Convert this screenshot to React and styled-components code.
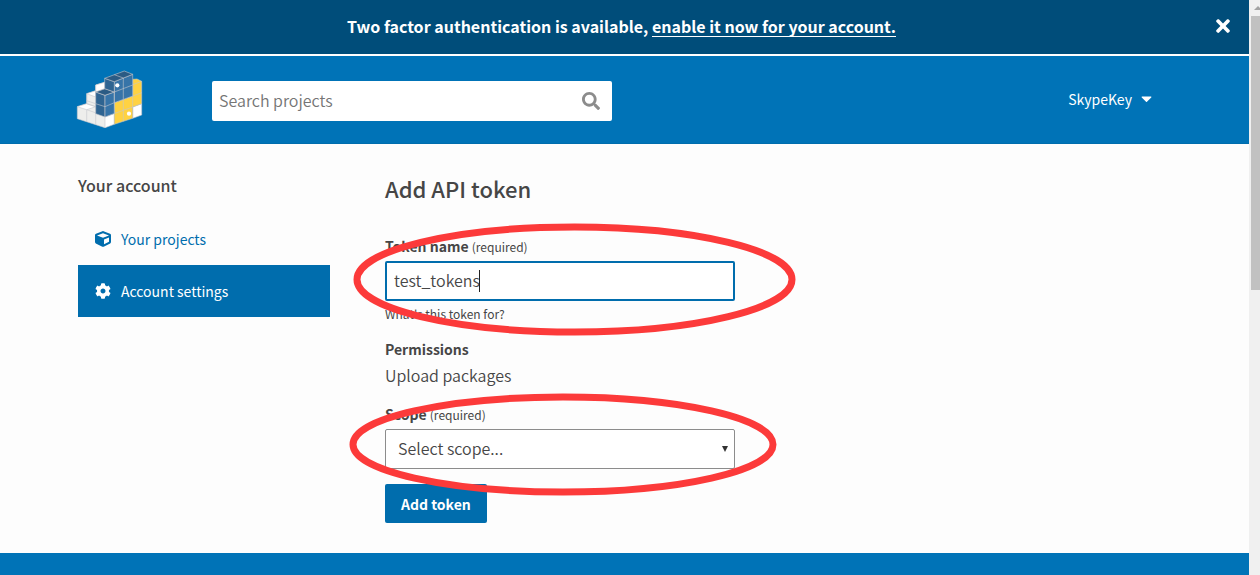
import React from "react";
import styled, { createGlobalStyle } from "styled-components";
import { FaTimes, FaSearch, FaCube, FaCog, FaCaretDown } from "react-icons/fa";

const GlobalStyle = createGlobalStyle`
  *, *::before, *::after { box-sizing: border-box; }
  body {
    margin: 0;
    background: #fdfdfd;
    color: #464646;
    font-family: "Noto Sans CJK SC", "Noto Sans", sans-serif;
    font-size: 16px;
    font-weight: 350;
    line-height: 24px;
  }
  input, select, button { font: inherit; color: inherit; margin: 0; }
`;

const Shell = styled.div`
  display: grid;
  grid-template-columns: minmax(0, 1fr) 11px;
  height: 100vh;
  overflow: hidden;
`;

const Page = styled.div`
  display: flex;
  flex-direction: column;
  min-width: 0;
`;

const Scrollbar = styled.div`
  display: flex;
  flex-direction: column;
  align-items: flex-end;
  background: #f0f0f0;
  overflow: hidden;
`;

const ScrollArrow = styled.svg`
  flex: none;
  width: 9px;
  height: 16px;
  fill: #a3a3a3;
`;

const ScrollThumb = styled.div`
  width: 9px;
  height: 274px;
  background: #c1c1c1;
`;

const Banner = styled.div`
  display: flex;
  align-items: center;
  padding: 14px 16px 16px 30px;
  background: #004d7a;
  border-bottom: 2px solid #fff;
  color: #fff;
`;

const BannerText = styled.p`
  flex: 1;
  margin: 0;
  text-align: center;
  font-size: 16px;
  font-weight: 700;
`;

const BannerLink = styled.a`
  display: inline-block;
  color: inherit;
  line-height: 20px;
  text-decoration: none;
  border-bottom: 1px solid #fff;
`;

const IconButton = styled.button`
  display: flex;
  padding: 0;
  border: 0;
  background: none;
  color: inherit;
  font-size: ${(p) => p.$size}px;
`;

const Header = styled.header`
  background: #0073b7;
  border-bottom: 1px solid #006dad;
`;

const Container = styled.div`
  display: flex;
  align-items: center;
  max-width: 1169px;
  margin: 0 auto;
  padding: 0 38px;
`;

const HeaderRow = styled(Container)`
  padding-top: 14px;
  padding-bottom: 14px;
`;

const LogoLink = styled.a`
  display: block;
  width: 66px;
  height: 59px;
  margin-right: 68px;
`;

const Search = styled.form`
  display: flex;
  align-items: center;
  width: 400px;
  height: 40px;
  margin: 2px 0 0;
  padding-right: 12px;
  background: #fff;
  border-radius: 2px;
  color: #8c8c8c;
`;

const SearchInput = styled.input`
  flex: 1;
  min-width: 0;
  padding: 6px 7px 8px;
  border: 0;
  outline: 0;
  background: none;
  &::placeholder { color: #757575; opacity: 1; }
`;

const UserButton = styled.button`
  display: flex;
  align-items: center;
  gap: 6px;
  margin-left: auto;
  padding: 0 16px 2px;
  border: 0;
  background: none;
  color: #fff;
  font-size: 14px;
  font-weight: 400;
`;

const Body = styled(Container)`
  align-items: flex-start;
  gap: 55px;
  width: 100%;
  padding-top: 30px;
  padding-bottom: 30px;
`;

const Sidebar = styled.aside`
  flex: none;
  width: 252px;
`;

const SidebarTitle = styled.h2`
  margin: 0 0 17px;
  font-size: 16px;
  font-weight: 500;
  line-height: 22px;
`;

const SideLink = styled.a`
  display: flex;
  align-items: center;
  gap: 10px;
  height: 52px;
  padding: 0 17px;
  color: ${(p) => (p.$active ? "#fff" : "#006dad")};
  background: ${(p) => (p.$active ? "#006dad" : "transparent")};
  font-size: 14px;
  font-weight: 400;
  text-decoration: none;
  svg { font-size: 16px; }
`;

const Content = styled.main`
  flex: 1;
  min-width: 0;
`;

const Title = styled.h1`
  margin: 0 0 32px;
  font-size: 22px;
  font-weight: 500;
  line-height: 28px;
`;

const Group = styled.div`
  position: relative;
  width: 350px;
  margin-bottom: ${(p) => p.$gap}px;
`;

const Label = styled.label`
  display: block;
  margin: 0 0 2px;
  font-size: 14px;
  font-weight: 700;
`;

const Required = styled.span`
  font-size: 12px;
  font-weight: 400;
`;

const Control = styled.div`
  position: relative;
`;

const TextInput = styled.input`
  display: block;
  width: 100%;
  height: 40px;
  padding: 0 7px 2px;
  border: 2px solid #006dad;
  border-radius: 2px;
  outline: 0;
  background: #fff;
`;

const Caret = styled.span`
  position: absolute;
  top: 9px;
  left: 94px;
  width: 1px;
  height: 22px;
  background: #222;
`;

const Select = styled.select`
  display: block;
  width: 100%;
  height: 40px;
  padding: 0 12px 2px;
  appearance: none;
  border: 1px solid #8c8c8c;
  border-radius: 2px;
  background: #fff;
`;

const SelectArrow = styled.svg`
  position: absolute;
  top: 17px;
  right: 7px;
  width: 6px;
  height: 6px;
  fill: #333;
  pointer-events: none;
`;

const Help = styled.p`
  margin: 4px 0 0;
  font-size: 12px;
  font-weight: 400;
  line-height: 18px;
`;

const Plain = styled.p`
  margin: 0;
`;

const Submit = styled.button`
  display: block;
  height: 39px;
  padding: 0 16px;
  border: 0;
  border-radius: 2px;
  background: #006dad;
  color: #fff;
  font-size: 14px;
  font-weight: 700;
`;

const Oval = styled.svg`
  position: absolute;
  z-index: 1;
  top: ${(p) => p.$top}px;
  left: ${(p) => p.$left}px;
  overflow: visible;
  pointer-events: none;
  fill: none;
  stroke: #fc3a3a;
  stroke-width: 7;
`;

const Footer = styled.footer`
  flex: 1 0 22px;
  background: #0073b7;
`;

function Highlight({ top, left, width, height }) {
  return (
    <Oval $top={top} $left={left} width={width} height={height} aria-hidden="true">
      <ellipse cx={width / 2} cy={height / 2} rx={width / 2 - 4} ry={height / 2 - 4} />
    </Oval>
  );
}

function Logo() {
  return (
    <svg viewBox="1 0 66 59" width="66" height="59" overflow="visible" aria-hidden="true">
      <g stroke="#c6c8cc" strokeWidth="0.6" strokeLinejoin="round">
        <path fill="#eeeeec" d="M0.300 36.700 9.700 33.700V23.700L18.700 20.700V15L27.700 12.300 46 20 28 57.700 0.300 48.700z" />
        <path fill="#fff" d="M0.300 36.700 9.700 33.700 18.700 36.700 9.700 39.700zM9.700 23.700 18.700 20.700 18.700 27zM18.700 15 27.700 12.300V18.700L18.700 22z" />
        <path fill="none" d="M9.700 33.700 18.700 36.700M9.700 39.700 28 46M9.700 39.700V51.700M18.700 22V54.700M9.700 23.700V33.700M9.700 30.700 18.700 33.700" />
        <path fill="#fff" d="M28 47 37.300 43.500V54.300L28 57.700zM55.700 37 64.700 33.700V45L55.700 48.300z" />
        <path fill="#ffd242" d="M55.700 9.300 60 9 64.700 11.300V33.700L55.700 37V48.300L37.300 54.300V32.700L55.700 26z" />
        <path fill="none" d="M46.300 29.300V51.300M55.700 26V37M37.300 43.500 55.700 37M55.700 26 64.700 22.700M55.700 14.700 64.700 11.300" />
        <path fill="#2f6491" d="M18.700 22 28 25.300V47L18.700 43.700z" />
        <path fill="#3774a8" d="M28 25.300 37.300 22V43.500L28 47zM37.300 11.700 55.700 4.300V26L37.300 32.700z" />
        <path fill="#2b5b84" d="M18.700 22 28 18.700 37.300 22 28 25.300z" />
        <path fill="#2f6491" d="M27.700 8.300 37.300 11.700V22L27.700 18.700z" />
        <path fill="#2b5b84" d="M27.700 8.300 47.300 1 55.700 4.300 37.300 11.700z" />
        <path fill="none" d="M18.700 33.700 28 36.700 37.300 32.700M37.300 22 55.700 15M46.300 8V29.300M37.300 4.700 46.300 8" />
      </g>
      <circle cx="40.300" cy="15.300" r="2.100" fill="#fff" />
      <circle cx="52" cy="43.700" r="2.100" fill="#fff" />
    </svg>
  );
}

export default function App() {
  return (
    <>
      <GlobalStyle />
      <Shell>
        <Page>
          <Banner>
            <BannerText>
              Two factor authentication is available, <BannerLink href="#two-factor">enable it now for your account.</BannerLink>
            </BannerText>
            <IconButton type="button" aria-label="Close" $size={20}><FaTimes /></IconButton>
          </Banner>
          <Header>
            <HeaderRow>
              <LogoLink href="#home" aria-label="PyPI"><Logo /></LogoLink>
              <Search role="search">
                <SearchInput type="text" placeholder="Search projects" aria-label="Search projects" />
                <IconButton type="submit" aria-label="Search" $size={18}><FaSearch /></IconButton>
              </Search>
              <UserButton type="button">SkypeKey <FaCaretDown size={17} /></UserButton>
            </HeaderRow>
          </Header>
          <Body>
            <Sidebar>
              <SidebarTitle>Your account</SidebarTitle>
              <nav aria-label="Your account">
                <SideLink href="#projects"><FaCube />Your projects</SideLink>
                <SideLink href="#settings" $active><FaCog />Account settings</SideLink>
              </nav>
            </Sidebar>
            <Content>
              <Title>Add API token</Title>
              <form>
                <Group $gap={14}>
                  <Label htmlFor="token-name">Token name <Required>(required)</Required></Label>
                  <Control>
                    <TextInput id="token-name" type="text" defaultValue="test_tokens" />
                    <Caret />
                  </Control>
                  <Help>What's this token for?</Help>
                  <Highlight top={-11} left={-32} width={443} height={113} />
                </Group>
                <Group $gap={15}>
                  <Label as="h2">Permissions</Label>
                  <Plain>Upload packages</Plain>
                </Group>
                <Group $gap={15}>
                  <Label htmlFor="scope">Scope <Required>(required)</Required></Label>
                  <Control>
                    <Select id="scope" defaultValue="">
                      <option value="">Select scope...</option>
                    </Select>
                    <SelectArrow viewBox="0 0 6 6"><path d="M0 0h6L3 6z" /></SelectArrow>
                  </Control>
                  <Highlight top={-9} left={-36} width={428} height={103} />
                </Group>
                <Submit type="button">Add token</Submit>
              </form>
            </Content>
          </Body>
          <Footer />
        </Page>
        <Scrollbar>
          <ScrollArrow viewBox="0 0 9 16"><path d="M3 10 7 6 11 10z" /></ScrollArrow>
          <ScrollThumb />
        </Scrollbar>
      </Shell>
    </>
  );
}
